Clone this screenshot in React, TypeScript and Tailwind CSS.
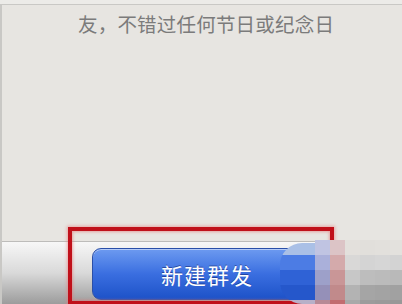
const cols = [315, 330, 345, 360, 375, 390];
const rows = [240, 255, 270, 285, 300];

// pixelated watermark blocks, col-major colours
const mosaic: string[][] = [
  ['#c0c4e2', '#aab0da', '#9da0c9', '#9590b8', '#b88a96'],
  ['#dcc4c6', '#d4aaab', '#c99697', '#c18a8b', '#c26c70'],
  ['#e3e0dc', '#d9d8d7', '#c7c7c7', '#b3b3b3', '#a9a9a9'],
  ['#e1dfdb', '#d4d4d4', '#bdbdbd', '#a5a5a5', '#9c9c9c'],
  ['#e2e0dc', '#d6d6d6', '#bbbbbb', '#a3a3a3', '#9a9a9a'],
  ['#e3e1dd', '#d3d3d3', '#b9b9b9', '#a1a1a1', '#989898'],
];

function Mosaic() {
  return (
    <div className="absolute inset-0 pointer-events-none">
      {cols.map((x, ci) =>
        rows.map((y, ri) => (
          <div
            key={`${ci}-${ri}`}
            className="absolute"
            style={{ left: x, top: y, width: 15, height: 15, background: mosaic[ci][ri] }}
          />
        ))
      )}
      {/* smeared blob over the right end of the button */}
      <div className="absolute left-[280px] top-[243px] w-[35px] h-[61px] rounded-l-[22px] overflow-hidden flex flex-col">
        <div className="h-[12px] bg-[#aac0e6]" />
        <div className="h-[15px] bg-[#4c7ce4]" />
        <div className="h-[15px] bg-[#2f62d6]" />
        <div className="h-[15px] bg-[#2557cb]" />
        <div className="flex-1 bg-[#b8b0c8]" />
      </div>
    </div>
  );
}

export default function App() {
  return (
    <div
      className="relative w-[402px] h-[304px] overflow-hidden bg-[#ecebe8] flex flex-col"
      style={{ fontFamily: '"Noto Sans CJK SC", "Noto Sans", sans-serif' }}
    >
      <div className="mt-[4px] flex-1 flex flex-col border-t border-l-2 border-[#c9c8c5] bg-[#e7e5e1]">
        <p className="pt-[8px] pl-[76px] text-[19.5px] leading-[22px] text-[#7b7b7b] tracking-[0.2px]">
          友，不错过任何节日或纪念日
        </p>
        <div className="flex-1" />
        {/* bottom toolbar */}
        <div className="h-[63px] border-t border-[#bdbcba] bg-gradient-to-b from-[#f7f7f7] via-[#d9d9d9] to-[#9c9c9c] pl-[90px] pt-[6px]">
          <button className="w-[230px] h-[52px] rounded-[9px] border border-[#2a4fa8] bg-gradient-to-b from-[#6d9af0] via-[#3a6ee0] to-[#1d52c8] text-white text-[22px] leading-none tracking-[1px] shadow-[inset_0_1px_0_rgba(255,255,255,0.5)]">
            <span className="[text-shadow:0_-1px_0_rgba(0,0,60,0.4)]">新建群发</span>
          </button>
        </div>
      </div>

      {/* red highlight frame */}
      <div className="absolute left-[68px] top-[227px] w-[266px] h-[78px] border-[4px] border-[#c0101a] shadow-[0_0_3px_1px_rgba(230,120,120,0.6),inset_0_0_3px_1px_rgba(230,120,120,0.6)]" />

      <Mosaic />
    </div>
  );
}
